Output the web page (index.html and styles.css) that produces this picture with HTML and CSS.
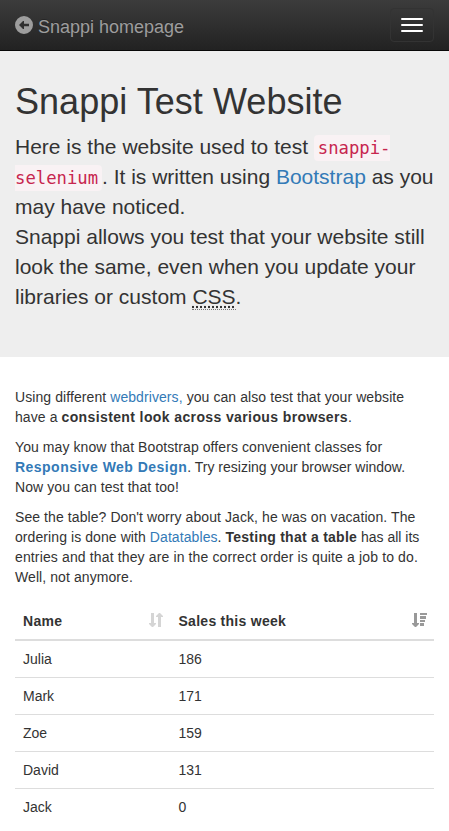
FILE: index.html
```html
<!DOCTYPE html>
<html lang="en">
<head>
<meta charset="utf-8">
<title>Snappi Test Website</title>
<link rel="stylesheet" href="styles.css">
</head>
<body>
<nav class="navbar">
  <a class="brand" href="#"><svg class="brand-icon" viewBox="0 0 18 18"><path fill-rule="evenodd" d="M9 0a9 9 0 1 0 0 18A9 9 0 0 0 9 0zM4 9l4-4h1v2.8h5v2.4H9V13H8z"/></svg><span>Snappi homepage</span></a>
  <button class="toggle" aria-label="Toggle navigation"><span class="bar"></span><span class="bar"></span><span class="bar"></span></button>
</nav>
<header class="jumbotron">
  <h1>Snappi Test Website</h1>
  <p>Here is the website used to test <code>snappi-selenium</code>. It is written using <a href="#">Bootstrap</a> as you may have noticed.<br>Snappi allows you test that your website still look the same, even when you update your libraries or custom <abbr>CSS</abbr>.</p>
</header>
<main class="container">
  <p>Using different <a href="#">webdrivers,</a> you can also test that your website<br>have a <strong>consistent look across various browsers</strong>.</p>
  <p>You may know that Bootstrap offers convenient classes for<br><a href="#"><strong class="wide">Responsive Web Design</strong></a><span class="normal">. Try resizing your browser window.</span><br>Now you can test that too!</p>
  <p>See the table? Don't worry about Jack, he was on vacation. The<br>ordering is done with <a href="#">Datatables</a>. <strong class="narrow">Testing that a table</strong><span class="normal"> has all its</span><br><span class="loose">entries and that they are in the correct order is quite a job to do.</span><br>Well, not anymore.</p>
  <table class="table">
    <thead>
      <tr>
        <th class="name"><div class="head">Name<svg class="sort sort-both" viewBox="0 0 15 14"><path d="M3 0h3v10h2v1l-3 3H4l-3-3v-1h2zM10 14h3V4h2V3l-3-3h-1L8 3v1h2z"/></svg></div></th>
        <th><div class="head">Sales this week<svg class="sort sort-desc" viewBox="0 0 15 14"><path d="M3 0h3v10h2v1l-3 3H4l-3-3v-1h2zM9 0h7v2H9zM9 3h6v3H9zM9 7h5v2H9zM9 10h4v3H9z"/></svg></div></th>
      </tr>
    </thead>
    <tbody>
      <tr><td>Julia</td><td>186</td></tr>
      <tr><td>Mark</td><td>171</td></tr>
      <tr><td>Zoe</td><td>159</td></tr>
      <tr><td>David</td><td>131</td></tr>
      <tr><td>Jack</td><td>0</td></tr>
    </tbody>
  </table>
</main>
</body>
</html>
```
FILE: styles.css
```css
* { box-sizing: border-box; }
html { overflow: hidden; }
body {
  margin: 0;
  font: 14px/20px "Liberation Sans", Arial, sans-serif;
  color: #333;
  background: #fff;
}
a { color: #337ab7; text-decoration: none; }
p { margin: 0 0 10px; }

.navbar {
  display: flex;
  justify-content: space-between;
  align-items: flex-start;
  height: 51px;
  padding: 0 15px;
  background: linear-gradient(#3c3c3c, #222);
  border-bottom: 1px solid #080808;
}
.brand {
  display: flex;
  gap: 5px;
  padding-top: 16px;
  font-size: 18px;
  line-height: 22px;
  color: #9d9d9d;
  text-shadow: 0 -1px 0 rgba(0, 0, 0, .25);
}
.brand-icon { width: 18px; height: 18px; fill: #9d9d9d; }
.toggle {
  width: 44px;
  height: 34px;
  margin-top: 8px;
  padding: 9px 10px;
  background: transparent;
  border: 1px solid #333;
  border-radius: 4px;
}
.bar { display: block; height: 2px; border-radius: 1px; background: #fff; }
.bar + .bar { margin-top: 4px; }

.jumbotron {
  height: 306px;
  margin-bottom: 30px;
  padding: 31px 15px 30px;
  background: #eee;
}
.jumbotron h1 {
  margin: 0 0 10px;
  font-size: 36px;
  line-height: 40px;
  font-weight: 400;
  letter-spacing: .04px;
}
.jumbotron p { margin: 0; font-size: 21px; line-height: 30px; }
code {
  padding: 3px 4px;
  font: 17.24px "DejaVu Sans Mono", monospace;
  color: #c7254e;
  background: #f9f2f4;
  border-radius: 4px;
}
abbr {
  padding-bottom: 1px;
  border-bottom: 1px dotted #777;
  text-decoration: underline dotted;
}

.container { padding: 0 15px; }
.container p { letter-spacing: .08px; white-space: nowrap; }
strong { letter-spacing: .385px; }
.wide { letter-spacing: .47px; }
.narrow { letter-spacing: .25px; }
.normal { letter-spacing: 0; }
.loose { letter-spacing: .135px; }

.table {
  width: 100%;
  margin-top: 16px;
  border-collapse: separate;
  border-spacing: 0;
  table-layout: fixed;
}
.table th, .table td { padding: 8px; text-align: left; }
.table th { border-bottom: 2px solid #ddd; letter-spacing: .27px; }
.table td { border-top: 1px solid #ddd; }
.table tbody tr:first-child td { border-top: 0; }
.name { width: 155.5px; }
.head { display: flex; justify-content: space-between; }
.sort { width: 15px; height: 14px; margin-top: 2px; overflow: visible; }
.sort-both { fill: #d5d5d5; }
.sort-desc { fill: #999; }
```
